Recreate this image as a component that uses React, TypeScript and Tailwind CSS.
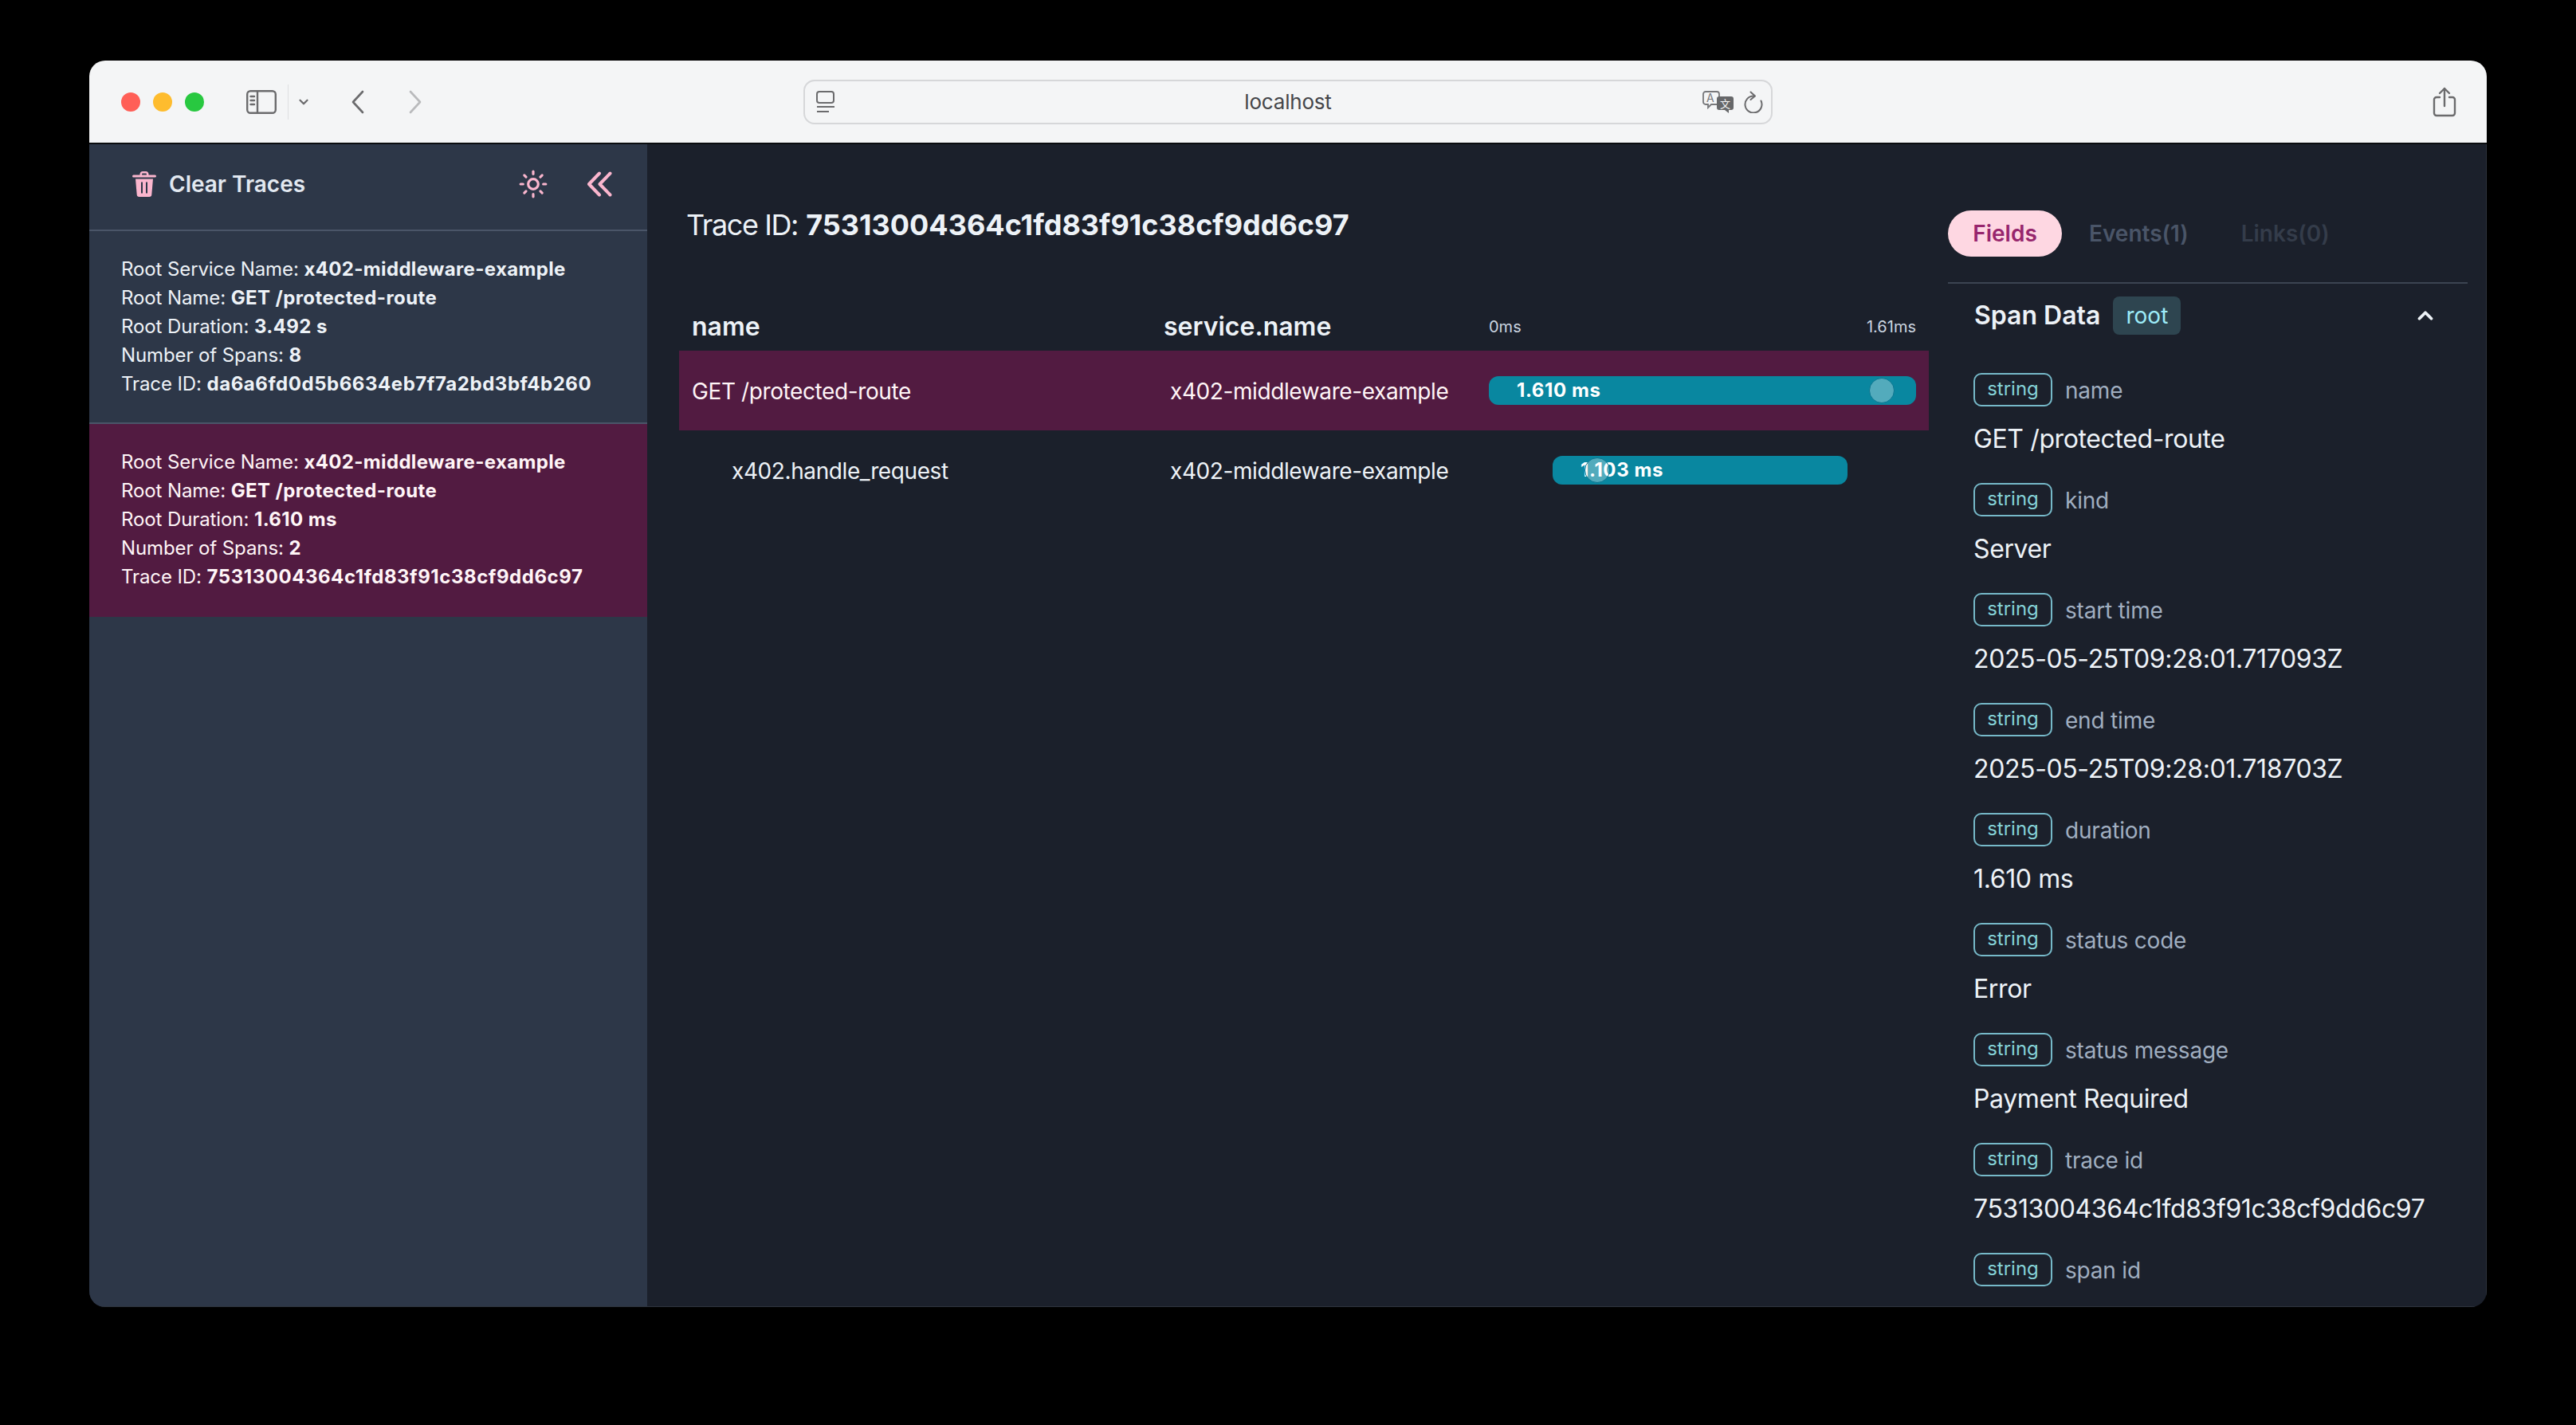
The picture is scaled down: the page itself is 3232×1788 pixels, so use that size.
import { ChevronDown, ChevronUp, Sun } from 'lucide-react'

const TRACES = [
  { service: 'x402-middleware-example', name: 'GET /protected-route', duration: '3.492 s', spans: '8', id: 'da6a6fd0d5b6634eb7f7a2bd3bf4b260', active: false },
  { service: 'x402-middleware-example', name: 'GET /protected-route', duration: '1.610 ms', spans: '2', id: '75313004364c1fd83f91c38cf9dd6c97', active: true },
]

const FIELDS = [
  { label: 'name', value: 'GET /protected-route' },
  { label: 'kind', value: 'Server' },
  { label: 'start time', value: '2025-05-25T09:28:01.717093Z' },
  { label: 'end time', value: '2025-05-25T09:28:01.718703Z' },
  { label: 'duration', value: '1.610 ms' },
  { label: 'status code', value: 'Error' },
  { label: 'status message', value: 'Payment Required' },
  { label: 'trace id', value: '75313004364c1fd83f91c38cf9dd6c97' },
  { label: 'span id', value: '' },
]

function TrashIcon() {
  return (
    <svg viewBox="0 0 30 32" className="w-[30px] h-[32px] text-[#fbb6ce]" fill="currentColor" aria-hidden="true">
      <path d="M9.5 4.5V3.5C9.5 1.6 11 0 13 0h4c2 0 3.5 1.6 3.5 3.5v1h8a1.5 1.5 0 0 1 0 3h-27a1.5 1.5 0 0 1 0-3h8zm2.6 0h5.8V3.6c0-.6-.4-1-1-1h-3.8c-.6 0-1 .4-1 1v.9z" />
      <path fillRule="evenodd" d="M4 9.5h22l-1.7 19.7A3 3 0 0 1 21.3 32H8.7a3 3 0 0 1-3-2.8L4 9.5zm7 4v14h2v-14h-2zm6 0v14h2v-14h-2z" />
    </svg>
  )
}

function DoubleChevron() {
  return (
    <svg viewBox="0 0 32 32" className="w-8 h-8 text-[#fbb6ce]" fill="none" stroke="currentColor" strokeWidth="4" strokeLinecap="round" strokeLinejoin="round" aria-hidden="true">
      <path d="M16 2.5 3 16l13 13.5" />
      <path d="M29.5 2.5 16.5 16l13 13.5" />
    </svg>
  )
}

function TranslateIcon() {
  return (
    <svg viewBox="0 0 40 30" className="w-10 h-[30px]" aria-hidden="true">
      <path d="M4 2h14a3 3 0 0 1 3 3v10a3 3 0 0 1-3 3h-7l-4 4v-4H4a3 3 0 0 1-3-3V5a3 3 0 0 1 3-3z" fill="none" stroke="#77787b" strokeWidth="1.8" />
      <text x="5" y="15" fontSize="14" fill="#77787b" fontFamily="Inter, sans-serif">A</text>
      <path d="M21 8h15a3 3 0 0 1 3 3v11a3 3 0 0 1-3 3h-3v4l-5-4h-7a3 3 0 0 1-3-3V11a3 3 0 0 1 3-3z" fill="#666769" />
      <text x="22" y="22" fontSize="13" fill="#f4f5f6" fontFamily="'Noto Sans CJK SC', sans-serif">文</text>
    </svg>
  )
}

function BrowserBar() {
  return (
    <div className="h-[105px] shrink-0 bg-[#f4f5f6] border-b-2 border-[#0b0d10] flex items-center pl-[40px] pr-[38px]">
      <div className="flex gap-4">
        <span className="w-6 h-6 rounded-full bg-[#ff5f57]" />
        <span className="w-6 h-6 rounded-full bg-[#febc2e]" />
        <span className="w-6 h-6 rounded-full bg-[#28c840]" />
      </div>
      <svg viewBox="0 0 38 30" className="ml-[53px] w-[38px] h-[30px] text-[#6b6b6d]" fill="none" stroke="currentColor" strokeWidth="2.4" aria-hidden="true">
        <rect x="1.2" y="1.2" width="35.6" height="27.6" rx="4" />
        <path d="M14 1.5v27" />
        <path d="M5.5 8h4.5M5.5 13h4.5M5.5 18h4.5" strokeLinecap="round" />
      </svg>
      <span className="ml-[14px] w-px h-[44px] bg-[#dedfe1]" />
      <ChevronDown size={18} strokeWidth={3} className="ml-[10px] text-[#6b6b6d]" />
      <svg viewBox="0 0 16 30" className="ml-[51px] w-4 h-[30px] text-[#6b6b6d]" fill="none" stroke="currentColor" strokeWidth="2.6" strokeLinecap="round" strokeLinejoin="round" aria-hidden="true">
        <path d="M14 2 2 15l12 13" />
      </svg>
      <svg viewBox="0 0 16 30" className="ml-[56px] w-4 h-[30px] text-[#b9babc]" fill="none" stroke="currentColor" strokeWidth="2.6" strokeLinecap="round" strokeLinejoin="round" aria-hidden="true">
        <path d="m2 2 12 13L2 28" />
      </svg>
      <div className="ml-[479px] w-[1216px] h-[56px] rounded-[14px] border-2 border-[#d6d7d9] flex items-center pl-[14px] pr-[10px]">
        <svg viewBox="0 0 24 28" className="w-6 h-7 text-[#6b6b6d]" fill="none" stroke="currentColor" strokeWidth="2" aria-hidden="true">
          <rect x="1" y="1" width="21" height="14" rx="3" />
          <path d="M1 20h22M1 26h15" />
        </svg>
        <span className="flex-1 text-center text-[26px] tracking-[-0.2px] text-[#45464a] pl-[48px]">localhost</span>
        <TranslateIcon />
        <svg viewBox="0 0 24 28" className="ml-3 w-6 h-7 text-[#6b6b6d]" fill="none" stroke="currentColor" strokeWidth="2" strokeLinecap="round" strokeLinejoin="round" aria-hidden="true">
          <path d="M21.5 12.5A10.5 10.5 0 1 1 12 6.5" />
          <path d="M8.5 1.5 14 6.5l-5.5 4.5" />
        </svg>
      </div>
      <svg viewBox="0 0 30 38" className="ml-auto w-[30px] h-[38px] text-[#6b6b6d]" fill="none" stroke="currentColor" strokeWidth="2.4" strokeLinecap="round" strokeLinejoin="round" aria-hidden="true">
        <path d="M9 13H5a3 3 0 0 0-3 3v17a3 3 0 0 0 3 3h20a3 3 0 0 0 3-3V16a3 3 0 0 0-3-3h-4" />
        <path d="M15 24V2M9 8l6-6 6 6" />
      </svg>
    </div>
  )
}

function Sidebar() {
  return (
    <aside className="w-[700px] shrink-0 bg-[#2d3748] flex flex-col">
      <div className="h-[109px] border-b-2 border-[#4a5568] flex items-center pb-[8px] pl-[54px] pr-[44px]">
        <TrashIcon />
        <span className="ml-4 text-[28px] font-semibold text-[#e2e8f0]">Clear Traces</span>
        <Sun size={38} strokeWidth={2} className="ml-auto mr-[48px] text-[#fbb6ce]" />
        <DoubleChevron />
      </div>
      {TRACES.map(t => (
        <div
          key={t.id}
          className={`pl-[40px] py-[30px] text-[24px] leading-[36px] tracking-[-0.1px] border-b-2 ${t.active ? 'bg-[#521b41] border-[#521b41] text-[#fff5f7]' : 'border-[#4a5568] text-[#edf2f7]'}`}
        >
          <p>Root Service Name: <b className="font-bold tracking-[0.35px]">{t.service}</b></p>
          <p>Root Name: <b className="font-bold tracking-[0.4px]">{t.name}</b></p>
          <p>Root Duration: <b className="font-bold tracking-[0.4px]">{t.duration}</b></p>
          <p>Number of Spans: <b className="font-bold">{t.spans}</b></p>
          <p>Trace ID: <b className="font-bold tracking-[0.55px]">{t.id}</b></p>
        </div>
      ))}
    </aside>
  )
}

function Bar({ label, offset, width, knob }: { label: string; offset: string; width: string; knob: string }) {
  return (
    <div className={`relative h-9 rounded-xl bg-[#0987a0] pl-[35px] text-[24px] leading-[35px] font-bold tracking-[0.6px] text-white ${offset} ${width}`}>
      {label}
      <span className={`absolute top-[2px] w-8 h-8 rounded-full bg-white/30 border border-[#0a7590] ${knob}`} />
    </div>
  )
}

function TraceTable() {
  return (
    <section className="w-[1568px] shrink-0">
      <h1 className="pl-[9px] pt-[77px] text-[36px] leading-[48px] text-[#edf2f7]">
        <span className="tracking-[-1.4px]">Trace ID:</span> <b className="font-bold">75313004364c1fd83f91c38cf9dd6c97</b>
      </h1>
      <div className="mt-[74px] h-[60px] pl-4 pr-4 flex items-center text-[#edf2f7]">
        <div className="w-[592px] text-[32px] font-semibold">name</div>
        <div className="w-[408px] text-[32px] font-semibold">service.name</div>
        <div className="flex-1 flex justify-between text-[20px] text-[#cbd5e0]">
          <span>0ms</span>
          <span>1.61ms</span>
        </div>
      </div>
      <div className="h-[100px] pl-4 pr-4 flex items-center bg-[#521b41] text-[28px] tracking-[-0.4px] text-[#fff5f7]">
        <div className="w-[592px] pt-[2px]">GET /protected-route</div>
        <div className="w-[408px] pl-2 pt-[2px]">x402-middleware-example</div>
        <div className="flex-1">
          <Bar label="1.610 ms" offset="ml-0" width="w-[536px]" knob="left-[477px]" />
        </div>
      </div>
      <div className="h-[100px] pl-4 pr-4 flex items-center text-[28px] tracking-[-0.4px] text-[#edf2f7]">
        <div className="w-[592px] pl-[50px] pt-[2px]">x402.handle_request</div>
        <div className="w-[408px] pl-2 pt-[2px]">x402-middleware-example</div>
        <div className="flex-1">
          <Bar label="1.103 ms" offset="ml-[80px]" width="w-[370px]" knob="left-[40px]" />
        </div>
      </div>
    </section>
  )
}

function DetailPanel() {
  return (
    <section className="ml-6 w-[652px] shrink-0 pt-[83px] overflow-hidden">
      <div className="flex items-center text-[28px] font-semibold">
        <span className="h-[58px] w-[143px] rounded-full bg-[#fed7e2] text-[#97266d] flex items-center justify-center">Fields</span>
        <span className="ml-[34px] text-[#4a5568]">Events(1)</span>
        <span className="ml-[66px] text-[#343c4a]">Links(0)</span>
      </div>
      <div className="mt-8 border-t-2 border-[#3c4452]" />
      <div className="mt-4 h-12 pl-[33px] pr-[38px] flex items-center">
        <span className="text-[32px] font-semibold text-[#edf2f7]">Span Data</span>
        <span className="ml-4 h-12 w-[85px] rounded-lg bg-[#2e4550] text-[28px] text-[#9decf9] flex items-center justify-center">root</span>
        <ChevronUp size={30} strokeWidth={3} className="ml-auto text-[#edf2f7]" />
      </div>
      <div className="mt-12 pl-8 flex flex-col gap-[31px]">
        {FIELDS.map(f => (
          <div key={f.label}>
            <div className="h-[42px] flex items-center">
              <span className="w-[99px] h-[42px] rounded-[10px] border-2 border-[#76b9c9] text-[24px] leading-[36px] text-[#85d3d8] text-center">string</span>
              <span className="ml-4 pt-[2px] text-[28px] tracking-[-0.2px] text-[#a0aec0]">{f.label}</span>
            </div>
            {f.value && <div className="mt-[17px] h-12 text-[32px] leading-[48px] tracking-[-0.38px] text-[#edf2f7]">{f.value}</div>}
          </div>
        ))}
      </div>
    </section>
  )
}

export default function App() {
  return (
    <div className="w-[3232px] h-[1788px] bg-black pt-[76px] pl-[112px] font-['Inter','Noto_Sans',sans-serif]">
      <div className="w-[3008px] h-[1564px] rounded-[20px] overflow-hidden flex flex-col">
        <BrowserBar />
        <div className="flex-1 min-h-0 flex bg-[#1b202b] border-r border-b border-[#2f343e]">
          <Sidebar />
          <main className="flex-1 min-w-0 pl-10 flex">
            <TraceTable />
            <DetailPanel />
          </main>
        </div>
      </div>
    </div>
  )
}
